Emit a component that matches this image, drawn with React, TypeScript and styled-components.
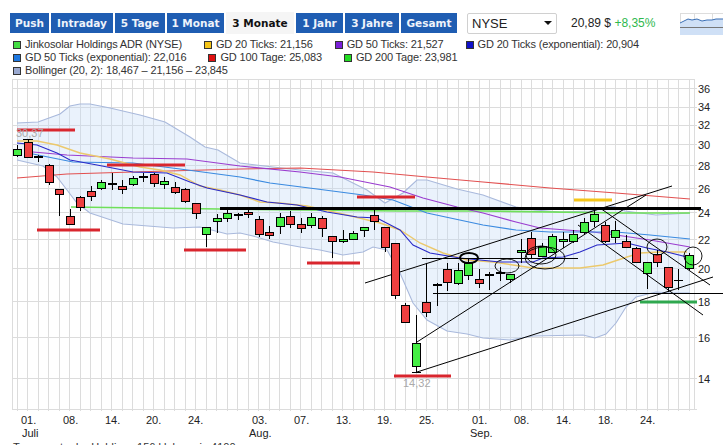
import React from "react";
import styled, { createGlobalStyle } from "styled-components";

const Global = createGlobalStyle`
  html, body { margin: 0; padding: 0; background: #fff; height: 445px; overflow: hidden; }
  #root { height: 445px; overflow: hidden; }
`;

const Page = styled.div`
  width: 723px;
  height: 445px;
  overflow: hidden;
  font-family: "Liberation Sans", Arial, sans-serif;
  color: #222;
`;
const Toolbar = styled.div`
  display: flex;
  align-items: center;
  height: 20px;
  padding: 13px 0 0 10px;
`;
const Tabs = styled.div`
  display: flex;
  gap: 2px;
  align-items: center;
`;
const Tab = styled.div<{ $w: number; $active?: boolean }>`
  width: ${(p) => p.$w}px;
  height: ${(p) => (p.$active ? 22 : 20)}px;
  line-height: ${(p) => (p.$active ? 22 : 20)}px;
  text-align: center;
  font-family: "DejaVu Sans", Verdana, sans-serif;
  font-weight: 700;
  font-size: 10.5px;
  color: ${(p) => (p.$active ? "#111" : "#eef3fb")};
  background: ${(p) => (p.$active ? "#f5f5f5" : "#1f5db2")};
`;
const Select = styled.div`
  box-sizing: border-box;
  width: 90px;
  height: 21px;
  margin-left: 10px;
  padding: 0 0 0 4px;
  display: flex;
  align-items: center;
  justify-content: space-between;
  border: 1px solid #d0d0d0;
  border-radius: 2px;
  font-size: 13px;
  color: #222;
`;
const Arrow = styled.span`
  width: 0;
  height: 0;
  margin-right: 4px;
  border-left: 4px solid transparent;
  border-right: 4px solid transparent;
  border-top: 4px solid #111;
`;
const Price = styled.div`
  margin-left: 14px;
  width: 109px;
  font-size: 12px;
  white-space: nowrap;
  color: #222;
`;
const Change = styled.span`
  color: #2fb84e;
`;
const Thumb = styled.svg`
  display: block;
  flex: none;
  width: 43px;
  height: 22px;
  margin-top: 2px;
`;
const Legend = styled.div`
  display: flex;
  flex-wrap: wrap;
  column-gap: 22px;
  width: 690px;
  margin: 5px 0 0 13px;
  height: 39px;
  font-size: 11px;
  line-height: 13px;
  letter-spacing: -0.15px;
  color: #333;
`;
const LegendItem = styled.div`
  display: flex;
  align-items: center;
  gap: 4px;
  height: 13px;
  white-space: nowrap;
`;
const Swatch = styled.i<{ $c: string }>`
  box-sizing: border-box;
  width: 8px;
  height: 8px;
  border: 1px solid #333;
  background: ${(p) => p.$c};
`;
const LegendBreak = styled.div`
  flex-basis: 100%;
  height: 0;
`;
const ChartSvg = styled.svg`
  display: block;
  width: 723px;
  height: 362px;
  margin-top: 2px;
`;
const Axis = styled.text`
  font-family: "Liberation Sans", Arial, sans-serif;
  font-size: 11px;
  fill: #222;
`;
const Extreme = styled.text`
  font-family: "Liberation Sans", Arial, sans-serif;
  font-size: 11px;
  fill: #aaa;
`;
const Footer = styled.div`
  padding-left: 13px;
  font-size: 11px;
  line-height: 13px;
  white-space: nowrap;
  color: #333;
`;

const tabs: [string, number, boolean?][] = [
  ["Push", 39], ["Intraday", 62], ["5 Tage", 50], ["1 Monat", 57],
  ["3 Monate", 68, true], ["1 Jahr", 47], ["3 Jahre", 54], ["Gesamt", 56],
];

const legend: ([string, string] | null)[] = [
  ["#44dd44", "Jinkosolar Holdings ADR (NYSE)"],
  ["#f5c518", "GD 20 Ticks: 21,156"],
  ["#7a1fd8", "GD 50 Ticks: 21,527"],
  ["#1010c8", "GD 20 Ticks (exponential): 20,904"],
  null,
  ["#1e78e0", "GD 50 Ticks (exponential): 22,016"],
  ["#e01010", "GD 100 Tage: 25,083"],
  ["#22dd22", "GD 200 Tage: 23,981"],
  null,
  ["#9aa9d0", "Bollinger (20, 2): 18,467 – 21,156 – 23,845"],
];

type P = [number, number];
const pts = (a: P[]) => a.map((p) => p.join(",")).join(" ");

const upper: P[] = [[17,123],[38,122],[60,114],[70,106],[80,104],[90,104],[110,108],[140,115],[165,122],[190,137],[205,147],[218,150],[240,163],[273,167],[300,170],[333,173],[367,190],[385,203],[403,193],[417,180],[427,180],[457,189],[483,195],[516,207],[535,210],[560,212],[590,211],[603,209],[613,206],[625,211],[656,215],[690,213]];
const lower: P[] = [[17,160],[30,163],[43,166],[57,177],[67,190],[77,203],[90,213],[123,224],[173,228],[200,227],[227,234],[240,233],[253,236],[273,242],[300,247],[320,250],[343,255],[363,252],[373,247],[387,250],[400,273],[413,303],[427,320],[447,331],[467,334],[483,338],[510,340],[533,336],[583,335],[595,338],[606,334],[616,323],[626,307],[636,297],[656,292],[670,293],[690,293]];
const gd20: P[] = [[17,141],[37,141],[57,145],[80,153],[110,159],[140,167],[160,170],[180,175],[200,186],[220,190],[240,195],[260,202],[280,203],[307,206],[347,215],[380,223],[400,230],[420,243],[443,253],[467,260],[493,262],[513,265],[533,268],[560,268],[580,268],[603,265],[627,257],[640,253],[660,252],[687,252]];
const gd20e: P[] = [[17,143],[37,145],[57,153],[70,160],[97,165],[133,172],[167,173],[190,182],[207,188],[240,195],[267,202],[297,205],[327,212],[357,217],[377,218],[400,230],[413,245],[430,253],[460,258],[500,262],[533,262],[543,258],[563,257],[580,252],[597,245],[627,243],[647,248],[667,252],[687,257]];
const gd50: P[] = [[33,152],[67,155],[133,158],[187,159],[240,166],[300,172],[340,177],[390,187],[423,198],[457,207],[483,213],[516,222],[540,228],[593,232],[616,235],[650,240],[690,247]];
const gd50e: P[] = [[33,154],[73,162],[133,163],[180,169],[240,177],[270,183],[317,189],[363,195],[393,200],[427,213],[483,225],[516,230],[550,232],[616,232],[650,235],[690,239]];
const gd100: P[] = [[17,178],[67,174],[133,172],[240,169],[300,168],[373,172],[427,177],[483,182],[550,188],[616,193],[690,199]];
const gd200: P[] = [[71,207],[220,209],[400,211],[483,211],[623,213],[690,213]];

// x, wick top, wick bottom, body top, body bottom, colour (r / g / d = doji)
const candles: [number, number, number, number, number, string][] = [
  [17,145,157,149,155,"g"],[28,139,158,142,157,"r"],[38,155,162,157,157,"d"],[49,164,185,165,182,"r"],
  [59,189,216,189,194,"r"],[70,209,225,216,224,"r"],[80,196,211,197,207,"r"],[91,186,201,191,196,"r"],
  [101,180,190,182,188,"g"],[112,173,190,184,184,"d"],[122,180,194,186,189,"r"],[133,176,186,178,184,"g"],
  [143,173,182,177,177,"d"],[154,173,187,174,183,"r"],[164,177,189,181,184,"g"],[175,182,194,187,192,"r"],
  [185,188,203,189,201,"r"],[196,203,219,203,213,"r"],[206,227,247,227,234,"g"],[217,214,233,218,221,"g"],
  [227,208,222,213,218,"g"],[238,213,220,215,215,"d"],[248,208,218,212,214,"r"],[259,216,237,219,234,"r"],
  [269,226,239,232,235,"r"],[280,213,234,217,226,"g"],[290,211,228,216,224,"r"],[301,218,233,224,228,"r"],
  [311,213,228,217,225,"g"],[322,216,237,218,228,"r"],[332,236,258,236,241,"r"],[343,230,243,239,241,"g"],
  [353,231,240,233,239,"g"],[364,227,237,227,230,"g"],[374,210,230,215,221,"r"],[385,227,252,227,247,"r"],
  [395,243,299,243,295,"r"],[405,303,322,305,322,"r"],[416,315,372,343,366,"g"],[426,263,317,302,312,"r"],
  [437,283,306,285,285,"d"],[447,263,291,269,282,"r"],[458,263,285,270,283,"g"],[468,258,280,263,275,"g"],
  [479,269,288,279,283,"r"],[489,272,290,275,275,"d"],[500,267,281,272,273,"r"],[510,274,283,274,279,"g"],
  [521,239,263,250,252,"g"],[531,232,258,238,254,"r"],[542,243,257,246,256,"g"],[552,234,253,236,252,"g"],
  [563,232,248,239,241,"g"],[573,230,243,234,241,"g"],[584,218,235,222,232,"g"],[594,210,227,214,221,"g"],
  [605,222,243,225,241,"r"],[615,221,243,230,237,"g"],[626,235,248,241,247,"r"],[636,247,262,248,262,"r"],
  [647,262,289,262,273,"g"],[657,250,267,254,262,"r"],[668,267,292,267,287,"r"],[689,253,270,255,268,"g"],
];

const hGrid = [88.5,107.5,125.5,144.5,165.5,188.5,212.5,239.5,268.5,301.5,337.5,378.5,409.5];
const vGrid = Array.from({ length: 65 }, (_, i) => Math.floor(17 + i * 10.5) + 0.5);
const yLabels: [string, number][] = [["36",93],["34",111],["32",129],["30",149],["28",170],["26",193],["24",217],["22",244],["20",273],["18",306],["16",342],["14",383]];
const xLabels: [string, number][] = [["01.",21],["08.",63],["14.",105],["20.",146],["24.",188],["03.",252],["07.",294],["13.",336],["19.",377],["25.",419],["01.",472],["08.",514],["14.",556],["18.",598],["24.",640]];
const marks: [number, number, number, string][] = [
  [17,75,130,"#d9262e"],[107,185,165,"#d9262e"],[37,100,230,"#d9262e"],[184,246,250,"#d9262e"],
  [307,360,263,"#d9262e"],[357,415,197,"#d9262e"],[394,451,376,"#d9262e"],[574,612,200,"#f5c518"],[640,697,302,"#2fa84f"],
];
const thin: [number, number, number, number][] = [
  [433,293.5,723,293.5],[365,283,672,186],[417,342,646,195],[417,372,713,277],[600,208,710,285],[578,225,703,315],[422,258.5,578,258.5],
];
const ellipses: [number, number, number, number][] = [[507,266,12,7],[541,255,15,9],[545,258,20,11],[657,247,10,8],[693,256,9,9]];

export default function App() {
  return (
    <Page>
      <Global />
      <Toolbar>
        <Tabs>
          {tabs.map(([t, w, a]) => (
            <Tab key={t} $w={w} $active={a}>{t}</Tab>
          ))}
        </Tabs>
        <Select>NYSE<Arrow /></Select>
        <Price>20,89 $ <Change>+8,35%</Change></Price>
        <Thumb viewBox="680 13 43 22">
          <path d="M680 13.5H723M680.5 13V35M694.5 13V35M712.5 13V35" stroke="#ddd" fill="none" />
          <path d="M680 23L684 21L688 19L692 20L697 19L702 21L707 20L712 20L716 19L723 19V35H680Z" fill="#cfe0f6" />
          <path d="M680 23L684 21L688 19L692 20L697 19L702 21L707 20L712 20L716 19L723 19" stroke="#3a6fb5" fill="none" />
          <path d="M680 27.5H723" stroke="#777" fill="none" />
        </Thumb>
      </Toolbar>
      <Legend>
        {legend.map((l, i) =>
          l ? (
            <LegendItem key={i}><Swatch $c={l[0]} />{l[1]}</LegendItem>
          ) : (
            <LegendBreak key={i} />
          )
        )}
      </Legend>
      <ChartSvg viewBox="0 79 723 362">
        <g stroke="#dcdcdc" fill="none">
          <path d="M12.5 79V410M12 79.5H695M694.5 79V410" />
          {vGrid.map((x) => <path key={x} d={`M${x} 79V411`} />)}
          {hGrid.map((y) => <path key={y} d={`M12 ${y}H697`} />)}
        </g>
        <polygon points={pts([...upper, ...[...lower].reverse()])} fill="#c6dbf7" fillOpacity={0.36} />
        <polyline points={pts(upper)} fill="none" stroke="#a9b9dc" strokeWidth={1.1} />
        <polyline points={pts(lower)} fill="none" stroke="#a9b9dc" strokeWidth={1.1} />
        <polyline points={pts(gd200)} fill="none" stroke="#6fe05a" strokeWidth={1.6} />
        <polyline points={pts(gd100)} fill="none" stroke="#e25050" strokeWidth={1.2} />
        <polyline points={pts(gd50)} fill="none" stroke="#9a3ccf" strokeWidth={1.2} />
        <polyline points={pts(gd50e)} fill="none" stroke="#3a8ae0" strokeWidth={1.2} />
        <polyline points={pts(gd20)} fill="none" stroke="#ecc96c" strokeWidth={1.4} />
        <polyline points={pts(gd20e)} fill="none" stroke="#2a2ac8" strokeWidth={1.1} />
        {marks.map(([a, b, y, c], i) => (
          <rect key={i} x={a} y={y - 1.5} width={b - a} height={3} fill={c} />
        ))}
        <rect x={220} y={207} width={481} height={3} fill="#000" />
        {thin.map(([a, b, c, d], i) => (
          <line key={i} x1={a} y1={b} x2={c} y2={d} stroke="#000" strokeWidth={1} />
        ))}
        {candles.map(([x, wt, wb, bt, bb, c], i) => (
          <g key={i}>
            <line x1={x + 0.5} x2={x + 0.5} y1={wt} y2={wb} stroke="#000" strokeWidth={1} />
            {c === "d" ? (
              <rect x={x - 4} y={bt - 1} width={9} height={2} fill="#000" />
            ) : (
              <rect x={x - 3.5} y={bt + 0.5} width={8} height={bb - bt} fill={c === "r" ? "#ee4040" : "#44ee44"} stroke="#000" strokeWidth={1} />
            )}
          </g>
        ))}
        <path d="M23 139.5H33M412 372.5H421M674 280.5H683M678.5 269V290" stroke="#000" fill="none" />
        <ellipse cx={469} cy={258} rx={9} ry={5} fill="none" stroke="#000" strokeWidth={2} />
        {ellipses.map(([cx, cy, rx, ry], i) => (
          <ellipse key={i} cx={cx} cy={cy} rx={rx} ry={ry} fill="none" stroke="#000" strokeWidth={0.9} />
        ))}
        <Extreme x={16} y={137}>30,37</Extreme>
        <Extreme x={403} y={387}>14,32</Extreme>
        {yLabels.map(([t, y]) => <Axis key={t} x={698} y={y}>{t}</Axis>)}
        {xLabels.map(([t, x], i) => <Axis key={i} x={x} y={424}>{t}</Axis>)}
        <Axis x={22} y={437}>Juli</Axis>
        <Axis x={249} y={437}>Aug.</Axis>
        <Axis x={470} y={437}>Sep.</Axis>
      </ChartSvg>
      <Footer>Tageswerte der Holdings 156 kk kann in 4100</Footer>
    </Page>
  );
}
